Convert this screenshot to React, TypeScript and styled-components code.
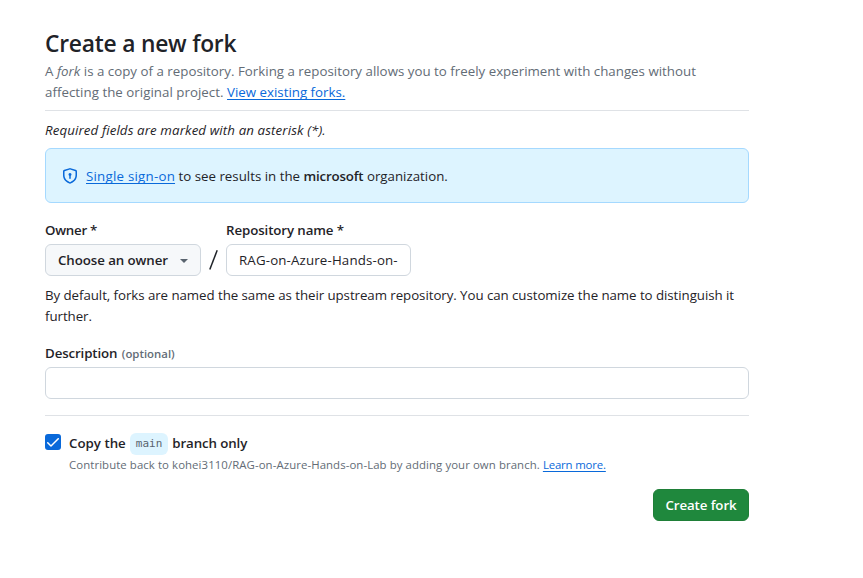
import React from "react";
import styled, { createGlobalStyle } from "styled-components";

const GlobalStyle = createGlobalStyle`
  *, *::before, *::after { box-sizing: border-box; }
  body {
    margin: 0;
    background: #ffffff;
    color: #1f2328;
    font-family: "Segoe UI", "Open Sans", "Noto Sans", sans-serif;
    font-size: 13.3px;
    line-height: 21px;
  }
  button, input { font: inherit; color: inherit; }
`;

const Page = styled.main`
  width: 704px;
  margin-left: 45px;
  padding-top: 26px;
`;

const Track = styled.span<{ $by: number }>`
  letter-spacing: ${(p) => p.$by}px;
`;

const Header = styled.header`
  height: 85px;
  border-bottom: 1px solid #dfe2e6;
`;

const Title = styled.h1`
  margin: 0;
  font-size: 22.8px;
  font-weight: 600;
  line-height: 35px;
  letter-spacing: -0.22px;
`;

const Lead = styled.p`
  margin: 0;
  color: #636c76;
  white-space: nowrap;
  letter-spacing: 0.01px;
`;

const Link = styled.a<{ $by?: number }>`
  color: #0969da;
  text-decoration: underline;
  text-decoration-thickness: 1px;
  text-underline-offset: 2px;
  text-decoration-skip-ink: none;
  letter-spacing: ${(p) => p.$by ?? 0}px;
`;

const Required = styled.p`
  margin: 9px 0 7px;
  font-style: italic;
  letter-spacing: 0.11px;
`;

const Banner = styled.section`
  display: flex;
  align-items: center;
  height: 55px;
  padding: 1px 16px 0;
  border: 1px solid #a5d9ff;
  border-radius: 6px;
  background: #ddf4ff;
  white-space: pre;

  svg { margin-right: 8px; }
`;

const Strong = styled.strong`
  font-weight: 600;
  letter-spacing: -0.17px;
`;

const Fields = styled.div`
  display: flex;
  align-items: flex-end;
  margin-top: 17px;
`;

const Field = styled.div<{ $width?: number }>`
  display: flex;
  flex-direction: column;
  width: ${(p) => (p.$width ? `${p.$width}px` : "100%")};
`;

const Label = styled.label<{ $by: number }>`
  height: 24px;
  font-weight: 600;
  letter-spacing: ${(p) => p.$by}px;
  white-space: nowrap;
`;

const Optional = styled.span`
  margin-left: 1px;
  color: #636c76;
  font-size: 11.4px;
  letter-spacing: 0;
`;

const OwnerButton = styled.button`
  display: flex;
  align-items: center;
  justify-content: space-between;
  height: 32px;
  padding: 0 12px;
  border: 1px solid #d0d7de;
  border-radius: 6px;
  background: #f6f8fa;
  font-weight: 600;
  letter-spacing: -0.08px;
`;

const Caret = styled.span`
  width: 0;
  margin-top: 1px;
  border: 4px solid transparent;
  border-top-color: #59636e;
  border-bottom: 0;
`;

const Slash = styled.span`
  width: 25px;
  height: 32px;
  display: flex;
  align-items: center;
  justify-content: center;

  svg { display: block; }
`;

const TextInput = styled.input`
  width: 100%;
  height: 32px;
  padding: 0 12px;
  border: 1px solid #d0d7de;
  border-radius: 6px;
  background: #ffffff;
  letter-spacing: 0.15px;
  outline: none;
`;

const Help = styled.p`
  margin: 9px 0 16px;
  letter-spacing: -0.06px;
`;

const Divider = styled.hr`
  height: 1px;
  margin: 16px 0 17px;
  border: 0;
  background: #dfe2e6;
`;

const BranchOption = styled.div`
  display: flex;
  align-items: flex-start;
  gap: 8px;
`;

const Checkbox = styled.span`
  display: flex;
  align-items: center;
  justify-content: center;
  width: 16px;
  height: 16px;
  margin-top: 1px;
  border-radius: 3px;
  background: #0969da;
`;

const BranchLabel = styled.div`
  display: flex;
  align-items: center;
  height: 21px;
  font-weight: 600;
`;

const BranchName = styled.code`
  margin: 0 4px;
  padding: 0 6px;
  border-radius: 6px;
  background: #ddf4ff;
  color: #59636e;
  font: 400 11px/22px Consolas, "DejaVu Sans Mono", monospace;
`;

const Caption = styled.p`
  margin: 2px 0 0;
  color: #636c76;
  font-size: 11.4px;
  line-height: 18px;
  letter-spacing: 0.08px;
`;

const Actions = styled.footer`
  display: flex;
  justify-content: flex-end;
  margin-top: 15px;
`;

const Submit = styled.button`
  width: 96px;
  height: 32px;
  padding: 0;
  border: 1px solid #1f7f38;
  border-radius: 6px;
  background: #1f883d;
  color: #ffffff;
  font-weight: 600;
  letter-spacing: -0.1px;
`;

const ShieldLockIcon = () => (
  <svg width="16" height="16" viewBox="0 0 16 16" fill="#0969da" aria-hidden="true">
    <path d="m8.533.133 5.25 1.68A1.75 1.75 0 0 1 15 3.48V7c0 1.566-.32 3.182-1.303 4.682-.983 1.498-2.585 2.813-5.032 3.855a1.697 1.697 0 0 1-1.33 0c-2.447-1.042-4.049-2.357-5.032-3.855C1.32 10.182 1 8.566 1 7V3.48a1.75 1.75 0 0 1 1.217-1.667l5.25-1.68a1.748 1.748 0 0 1 1.066 0Zm-.61 1.429.001.001-5.25 1.68a.251.251 0 0 0-.174.237V7c0 1.36.275 2.666 1.057 3.859.784 1.194 2.121 2.342 4.366 3.298a.196.196 0 0 0 .154 0c2.245-.957 3.582-2.103 4.366-3.297C13.225 9.666 13.5 8.358 13.5 7V3.48a.25.25 0 0 0-.174-.238l-5.25-1.68a.25.25 0 0 0-.153 0ZM9.5 6.5c0 .536-.286 1.032-.75 1.3v2.45a.75.75 0 0 1-1.5 0V7.8A1.5 1.5 0 1 1 9.5 6.5Z" />
  </svg>
);

const CheckIcon = () => (
  <svg width="12" height="9" viewBox="0 0 12 9" aria-hidden="true">
    <path
      fill="#ffffff"
      fillRule="evenodd"
      d="M11.78.22a.75.75 0 0 1 0 1.061L4.52 8.541a.75.75 0 0 1-1.062 0L.202 5.285a.75.75 0 0 1 1.061-1.061l2.725 2.723L10.718.22a.75.75 0 0 1 1.062 0Z"
    />
  </svg>
);

export default function App() {
  return (
    <>
      <GlobalStyle />
      <Page>
        <Header>
          <Title>Create a new fork</Title>
          <Lead>
            A <em>fork</em> is a copy of a repository. Forking a repository allows you to freely
            experiment with changes without
            <br />
            <Track $by={0.03}>affecting the original project. </Track>
            <Link>View existing forks.</Link>
          </Lead>
        </Header>
        <Required>Required fields are marked with an asterisk (*).</Required>
        <Banner>
          <ShieldLockIcon />
          <Link $by={0.23}>Single sign-on</Link>
          <span> to see results in the </span>
          <Strong>microsoft</Strong>
          <span> organization.</span>
        </Banner>
        <Fields>
          <Field $width={156}>
            <Label $by={-0.25}>Owner *</Label>
            <OwnerButton type="button">
              Choose an owner
              <Caret />
            </OwnerButton>
          </Field>
          <Slash>
            <svg width="9" height="20" viewBox="0 0 9 20" role="img" aria-label="/">
              <path d="M8.2 0.3 0.8 19.4" stroke="#1f2328" strokeWidth="1.5" fill="none" />
            </svg>
          </Slash>
          <Field $width={185}>
            <Label $by={-0.1}>Repository name *</Label>
            <TextInput defaultValue="RAG-on-Azure-Hands-on-Lab" />
          </Field>
        </Fields>
        <Help>
          By default, forks are named the same as their upstream repository. You can customize the
          name to distinguish it further.
        </Help>
        <Field>
          <Label $by={-0.12}>
            Description <Optional>(optional)</Optional>
          </Label>
          <TextInput />
        </Field>
        <Divider />
        <BranchOption>
          <Checkbox role="checkbox" aria-checked="true">
            <CheckIcon />
          </Checkbox>
          <div>
            <BranchLabel>
              Copy the <BranchName>main</BranchName> <Track $by={-0.1}>branch only</Track>
            </BranchLabel>
            <Caption>
              Contribute back to kohei3110/RAG-on-Azure-Hands-on-Lab by adding your own branch.{" "}
              <Link $by={-0.16}>Learn more.</Link>
            </Caption>
          </div>
        </BranchOption>
        <Actions>
          <Submit type="button">Create fork</Submit>
        </Actions>
      </Page>
    </>
  );
}
